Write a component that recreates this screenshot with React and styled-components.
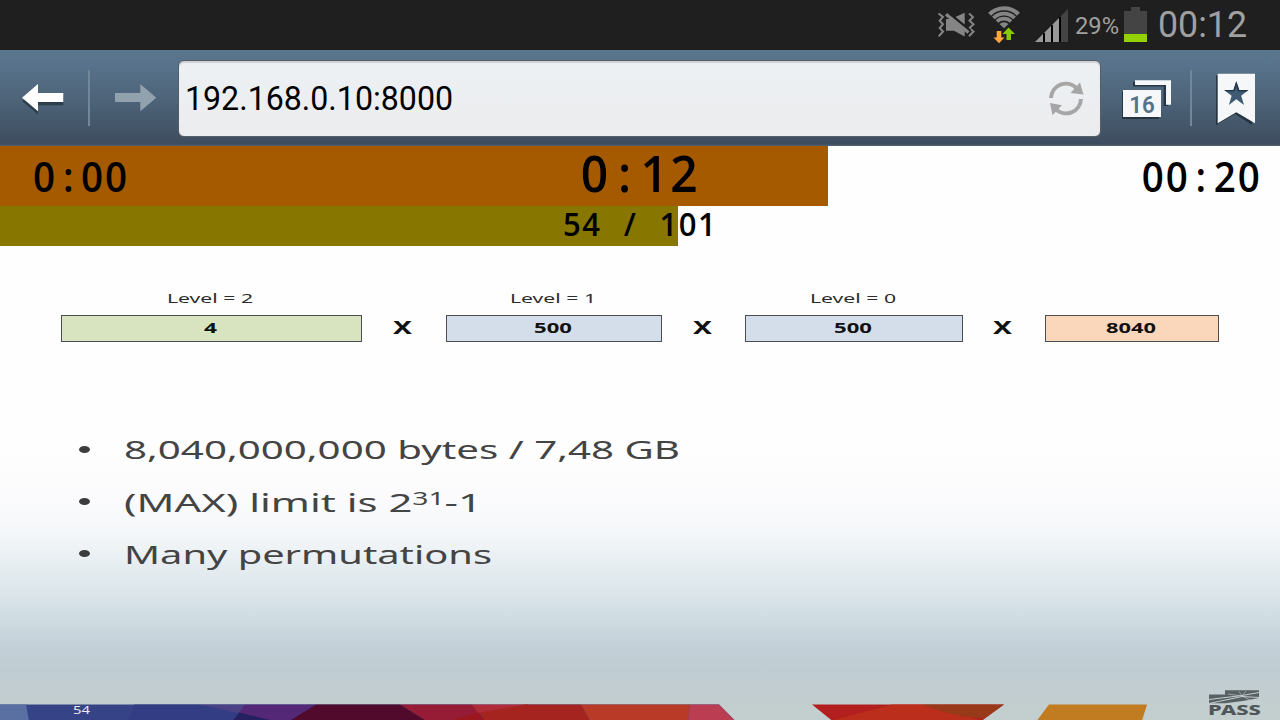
import React, { useLayoutEffect, useRef } from "react";
import styled, { createGlobalStyle } from "styled-components";

const GlobalStyle = createGlobalStyle`
  *, *::before, *::after { box-sizing: border-box; }
  body { margin: 0; background: #fff; overflow: hidden; }
  svg { display: block; flex: none; }
`;

const Screen = styled.div`
  width: 1280px;
  height: 720px;
  display: flex;
  flex-direction: column;
  overflow: hidden;
  background: #fefefe;
  font-family: Roboto, "Liberation Sans", sans-serif;
`;

/* Text stretched horizontally to an exact width */
const FitBox = styled.span`
  display: block;
  flex: none;
  width: ${(p) => p.$width}px;
  white-space: nowrap;
`;
const FitInner = styled.span`
  display: inline-block;
  transform-origin: 0 50%;
`;

function Fit({ width, children }) {
  const ref = useRef(null);
  useLayoutEffect(() => {
    const el = ref.current;
    const apply = () => {
      if (el.offsetWidth) {
        el.style.transform = "none";
        const natural = el.getBoundingClientRect().width;
        el.style.transform = `scaleX(${width / natural})`;
      }
    };
    apply();
    document.fonts.ready.then(apply);
  }, [width]);
  return (
    <FitBox $width={width}>
      <FitInner ref={ref}>{children}</FitInner>
    </FitBox>
  );
}

const StatusBar = styled.header`
  height: 50px;
  flex: none;
  display: flex;
  align-items: flex-start;
  justify-content: flex-end;
  padding-right: 33px;
  background: #1f1f1f;
  color: #a0a0a0;
`;
const IconSlot = styled.div`
  margin: ${(p) => p.$top}px ${(p) => p.$right || 0}px 0 ${(p) => p.$left || 0}px;
`;
const StatusText = styled.div`
  margin: 0 ${(p) => p.$right || 0}px 0 0;
  font-size: ${(p) => p.$size}px;
  line-height: ${(p) => p.$line}px;
`;

const Toolbar = styled.nav`
  height: 96px;
  flex: none;
  display: flex;
  align-items: flex-start;
  background: linear-gradient(#5a768d 0%, #57728a 18%, #4c6277 55%, #3e4d5e 98%, #56636f 100%);
`;
const Separator = styled.div`
  width: 2px;
  height: 56px;
  margin-top: 20px;
  background: #71879a;
`;
const UrlField = styled.div`
  width: 923px;
  height: 77px;
  margin: 9.5px -1px 0 21px;
  padding: 2px 16px 0 6px;
  display: flex;
  align-items: center;
  justify-content: space-between;
  border: 1px solid #565e66;
  border-radius: 6px;
  background: linear-gradient(#edf1f4, #ebecee);
  box-shadow: inset 0 2px 1px #cfd1d4;
  font-size: 32.5px;
  color: #000;
`;

const Timer = styled.section`
  height: 60px;
  flex: none;
  display: grid;
  grid-template-columns: 1fr auto 1fr;
  padding: 0 18px 0 20px;
  background: linear-gradient(#a55a00, #a55a00) 0 0 / 828px 60px no-repeat #fefefe;
`;
const Counter = styled.section`
  height: 40px;
  flex: none;
  display: flex;
  justify-content: center;
  padding-left: 1px;
  background: linear-gradient(#877700, #877700) 0 0 / 678px 40px no-repeat #fefefe;
`;
/* Condensed digits on a fixed advance */
const Digits = styled.span`
  display: inline-block;
  font-family: "Open Sans", "Noto Sans", sans-serif;
  font-weight: 560;
  font-size: ${(p) => p.$size}px;
  line-height: ${(p) => p.$line}px;
  letter-spacing: 0.051em;
  white-space: pre;
  color: #000;
  justify-self: ${(p) => p.$align || "center"};
  margin-left: ${(p) => p.$indent || 0}px;
  transform: scaleX(0.94);
  transform-origin: ${(p) => ({ start: "left", end: "right" })[p.$align] || "center"};
`;
const Cell = styled.span`
  display: inline-block;
  width: 0.622em;
  padding-right: 0.04em;
  letter-spacing: 0;
  text-align: center;
`;

function MonoText({ text, ...rest }) {
  return (
    <Digits {...rest}>
      {text.split(/([:\/ ])/).map((part, i) => (/^[:\/ ]$/.test(part) ? <Cell key={i}>{part}</Cell> : part))}
    </Digits>
  );
}

const Slide = styled.main`
  flex: 1;
  position: relative;
  display: flex;
  flex-direction: column;
  overflow: hidden;
  font-family: "Noto Sans", "Open Sans", sans-serif;
  background: linear-gradient(
    #fefefe 0px, #fefefe 205px, #fbfbfd 255px, #f3f6f8 290px, #e6edf1 320px, #dce6eb 345px,
    #d0dde3 370px, #c3d0d7 400px, #bfccd2 425px, #c3cecf 458px
  );
`;
const Formula = styled.div`
  margin-left: 61px;
  display: grid;
  grid-template-columns: 301px 84px 216px 83px 218px 82px 174px;
  grid-template-rows: 27px 27px;
  padding-top: 42px;
  justify-items: center;
`;
const LevelLabel = styled.div`
  grid-row: 1;
  grid-column: ${(p) => p.$col};
  padding-right: 3px;
  font-size: 13.3px;
  line-height: 20px;
  color: #2c2c2c;
`;
const Factor = styled.div`
  grid-row: 2;
  justify-self: stretch;
  display: flex;
  justify-content: center;
  align-items: center;
  padding: 0 2px 2px 0;
  border: 1.5px solid #4b4f54;
  background: ${(p) => p.$fill};
  font-size: 13.3px;
  font-weight: 700;
  line-height: 22px;
  color: #111;
`;
const Times = styled.div`
  grid-row: 2;
  padding-right: 3px;
  font-size: 18.5px;
  font-weight: 700;
  line-height: 24px;
  color: #111;
`;
const Bullets = styled.ul`
  list-style: none;
  margin: 81px 0 0;
  padding: 0 0 0 78.5px;
`;
const Bullet = styled.li`
  height: 52.4px;
  display: flex;
  align-items: center;
  gap: 34.5px;
  font-size: 26px;
  line-height: 52px;
  color: #444;
  &::before {
    content: "";
    width: 11px;
    height: 7px;
    border-radius: 50%;
    background: #3c3c3c;
  }
  sup {
    font-size: 17.5px;
    line-height: 0;
    vertical-align: 7.5px;
  }
`;
const Footer = styled.footer`
  position: absolute;
  left: 0;
  right: 0;
  bottom: 0;
  height: 16px;
`;
const PageNumber = styled.div`
  position: absolute;
  left: 73px;
  top: -2px;
  font-size: 10.5px;
  line-height: 16px;
  color: #e8eaf4;
`;
const Logo = styled.div`
  position: absolute;
  right: 19px;
  bottom: 4px;
  width: 53px;
  color: #50575a;
  font-size: 13.5px;
  font-weight: 800;
  line-height: 12px;
`;

const MuteIcon = () => (
  <svg width="39" height="26" viewBox="0 0 39 26">
    <g fill="none" stroke="#858585" strokeWidth="2">
      <path d="M1.5 1.5 6 5 2.7 8.7 6 12.2 2.7 16 6 19.5 1.7 24.3" />
      <path d="M32 1.5 36 5 32.5 8.7 36.5 12.2 32.5 16 36.5 19.5 32 24.3" />
    </g>
    <path d="M9 7H14L27.7.8V24.5L17 18.7H9Z" fill="#858585" />
    <path d="M10 .2 33 19" stroke="#1f1f1f" strokeWidth="3.5" />
    <path d="M9 2.3 31.5 20.5" stroke="#858585" strokeWidth="3.2" />
  </svg>
);
const WifiIcon = () => (
  <svg width="34" height="38" viewBox="0 0 34 38">
    <g fill="none" stroke="#858585" strokeWidth="3.8">
      <path d="M2.6 8.2A20.4 20.4 0 0 1 31.4 8.2" strokeWidth="4.2" />
      <path d="M6.4 12A14.9 14.9 0 0 1 27.6 12" />
      <path d="M10 15.5A9.9 9.9 0 0 1 24 15.5" />
    </g>
    <path d="M12.5 18A6.4 6.4 0 0 1 21.5 18L17 22.3Z" fill="#858585" />
    <path d="M9.7 25H14.3V31.5H17.5L12 37.3 6.5 31.5H9.7Z" fill="#ffa63b" />
    <path d="M21.5 21.5 28 28H24V34H19.5V28H15.5Z" fill="#8cc800" />
  </svg>
);
const SignalIcon = () => (
  <svg width="33" height="33" viewBox="0 0 33 33">
    <path d="M0 33 25 8V33Z" fill="#999" />
    <path d="M25.5 7.5 33 0V33H25.5Z" fill="#444" />
    <path d="M9 24V33M17 16V33M25 8V33" stroke="#000" strokeWidth="2" />
  </svg>
);
const BatteryIcon = () => (
  <svg width="23" height="35" viewBox="0 0 23 35">
    <path d="M7 0H16V4H23V27H0V4H7Z" fill="#444" />
    <path d="M0 27H23V35H0Z" fill="#93d200" />
  </svg>
);
const NavArrow = ({ forward }) => (
  <svg width="44" height="32" viewBox="0 0 44 32" overflow="visible">
    {!forward && <path d="M1 16 17 2.3V11.3H42.3V20.3H17V29.6Z" fill="#1e2b38" opacity=".65" transform="translate(0 2)" />}
    <path
      d="M1 14.7 17 1V10H42.3V19H17V28.3Z"
      fill={forward ? "#91a1ae" : "#fff"}
      transform={forward ? "translate(44.3) scale(-1 1)" : undefined}
    />
  </svg>
);
const ReloadIcon = () => (
  <svg width="36" height="36" viewBox="0 0 36 36">
    <g fill="none" stroke="#a6a6a6" strokeWidth="4">
      <path d="M3 17A15 15 0 0 1 28.5 7" />
      <path d="M33 18A15 15 0 0 1 7.5 28" />
    </g>
    <path d="M32 1.5 35.5 13.5 22.5 12Z" fill="#a6a6a6" />
    <path d="M2 22 14 24.3 4.5 34.3Z" fill="#a6a6a6" />
  </svg>
);
const TabsIcon = () => (
  <svg width="54" height="44" viewBox="0 0 54 44">
    <g fill="#17232f" opacity=".7">
      <path d="M12 4.7H47V29H42.6V9.4H12Z" />
      <path d="M1 14.5H38V42H1Z" />
    </g>
    <path d="M14 3.3H50V27.7H45V8H14Z" fill="#f5f7f9" />
    <path d="M2 13H40V40H2Z" fill="#f5f7f9" />
    <text x="21" y="36" textAnchor="middle" fontFamily="Roboto, sans-serif" fontWeight="600" fontSize="24" textLength="25.5" lengthAdjust="spacingAndGlyphs" fill="#54728b">
      16
    </text>
  </svg>
);
const BookmarkIcon = () => (
  <svg width="42" height="54" viewBox="0 0 42 54">
    <path d="M1 3.5H37V53L20 42 1 53Z" fill="#17232f" opacity=".7" />
    <path d="M2.7 1.7H40V51.3L21.3 40.3 2.7 51.3Z" fill="#f5f7f9" />
    <path d="M21.3 9.3 24.3 18H33.4L26.2 23.7 29 33 21.3 27.2 13.9 33 16.6 23.7 9.2 18H18.4Z" fill="#3f5b73" />
    <path d="M21.3 9.3 24.3 18H33.4L31.5 19.6H23.2L21.3 14 19.4 19.6H11.2L9.2 18H18.4Z" fill="#22384c" />
  </svg>
);
const FooterArt = () => (
  <svg width="1280" height="16" viewBox="0 0 1280 16">
    <g transform="translate(0 .6)">
      <path d="M0 0H719L735 16H0Z" fill="#364386" />
      <path d="M0 0H26L29 16H0Z" fill="#5a6fa2" />
      <path d="M134 0H200L272 16H128Z" fill="#333d83" />
      <path d="M200 0H245L238 8.5Z" fill="#4b4285" />
      <path d="M240 7 233 16H275Z" fill="#252161" />
      <path d="M245 0H316L290 16H273L239 8Z" fill="#552877" />
      <path d="M316 0H400L426 16H290Z" fill="#510a2c" />
      <path d="M400 0H472L485 16H426Z" fill="#961b34" />
      <path d="M472 0H530L478 9Z" fill="#b12c3a" />
      <path d="M450 16 478 8 485 16Z" fill="#9c171d" />
      <path d="M525 0H581L590 16H485L479 8Z" fill="#a52420" />
      <path d="M581 0H690L688 16H590Z" fill="#b83a27" />
      <path d="M690 0H719L735 16H688Z" fill="#bb3d51" />
      <path d="M812 0H1004L982 16H832Z" fill="#b31e1e" />
      <path d="M832 16 892 0H922L970 13 982 16Z" fill="#bb2e1b" />
      <path d="M922 0H1004L984 14C970 13 950 11 922 0Z" fill="#983919" />
      <path d="M1049 0H1147L1142 16H1037Z" fill="#c17b20" />
    </g>
  </svg>
);
const FlagMark = () => (
  <svg width="53" height="14" viewBox="0 0 53 14">
    <path d="M1 4.5H17V.3H51V8L35 11 17 13.2H1Z" fill="#596063" />
    <path d="M1 9.5 34 5.5 51 2.5M1 13.5 34 6.5 51 7.5" stroke="#c2cdcf" strokeWidth="1" fill="none" />
    <path d="M34 6 20 4M34 6 31 1.5M34 6 38 1M34 6 44 11" stroke="#c2cdcf" strokeWidth=".6" fill="none" />
  </svg>
);

export default function App() {
  return (
    <Screen>
      <GlobalStyle />
      <StatusBar>
        <IconSlot $top={12} $right={11}><MuteIcon /></IconSlot>
        <IconSlot $top={6} $right={14}><WifiIcon /></IconSlot>
        <IconSlot $top={9} $right={7}><SignalIcon /></IconSlot>
        <StatusText $size={23.5} $line={53} $right={5}><Fit width={44}>29%</Fit></StatusText>
        <IconSlot $top={7} $right={11}><BatteryIcon /></IconSlot>
        <StatusText $size={36} $line={51}><Fit width={89}>00:12</Fit></StatusText>
      </StatusBar>
      <Toolbar>
        <IconSlot $top={33} $left={21} $right={23}><NavArrow /></IconSlot>
        <Separator />
        <IconSlot $top={33} $left={23}><NavArrow forward /></IconSlot>
        <UrlField>
          <Fit width={268}>192.168.0.10:8000</Fit>
          <ReloadIcon />
        </UrlField>
        <IconSlot $top={27} $left={21} $right={15}><TabsIcon /></IconSlot>
        <Separator />
        <IconSlot $top={22} $left={23}><BookmarkIcon /></IconSlot>
      </Toolbar>
      <Timer>
        <MonoText text="0:00" $size={41} $line={61} $align="start" $indent={13} />
        <MonoText text="0:12" $size={51} $line={53} />
        <MonoText text="00:20" $size={41} $line={61} $align="end" />
      </Timer>
      <Counter>
        <MonoText text="54 / 101" $size={33} $line={35} />
      </Counter>
      <Slide>
        <Formula>
          <LevelLabel $col={1}><Fit width={86}>Level = 2</Fit></LevelLabel>
          <LevelLabel $col={3}><Fit width={86}>Level = 1</Fit></LevelLabel>
          <LevelLabel $col={5}><Fit width={86}>Level = 0</Fit></LevelLabel>
          <Factor $fill="#d8e3bf"><Fit width={13}>4</Fit></Factor>
          <Times><Fit width={19}>X</Fit></Times>
          <Factor $fill="#d4deea"><Fit width={38}>500</Fit></Factor>
          <Times><Fit width={19}>X</Fit></Times>
          <Factor $fill="#d4deea"><Fit width={38}>500</Fit></Factor>
          <Times><Fit width={19}>X</Fit></Times>
          <Factor $fill="#fad7bb"><Fit width={50}>8040</Fit></Factor>
        </Formula>
        <Bullets>
          <Bullet><Fit width={556}>8,040,000,000 bytes / 7,48 GB</Fit></Bullet>
          <Bullet><Fit width={358}>(MAX) limit is 2<sup>31</sup>-1</Fit></Bullet>
          <Bullet><Fit width={368}>Many permutations</Fit></Bullet>
        </Bullets>
        <Footer>
          <FooterArt />
          <PageNumber><Fit width={17}>54</Fit></PageNumber>
          <Logo>
            <FlagMark />
            <Fit width={53}>PASS</Fit>
          </Logo>
        </Footer>
      </Slide>
    </Screen>
  );
}
